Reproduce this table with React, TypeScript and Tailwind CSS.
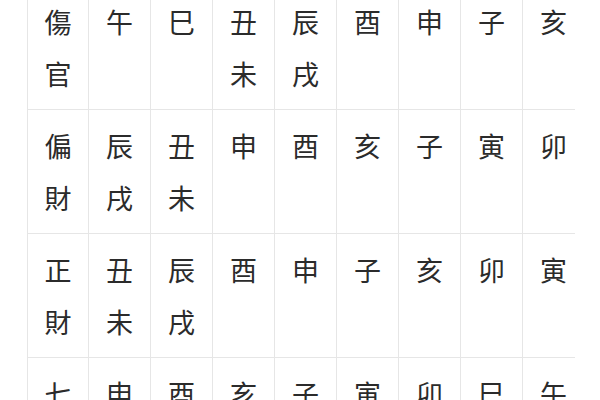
import * as React from "react";

const rows: string[][] = [
  ["傷官", "午", "巳", "丑未", "辰戌", "酉", "申", "子", "亥"],
  ["偏財", "辰戌", "丑未", "申", "酉", "亥", "子", "寅", "卯"],
  ["正財", "丑未", "辰戌", "酉", "申", "子", "亥", "卯", "寅"],
  ["七殺", "申", "酉", "亥", "子", "寅", "卯", "巳", "午"],
];

function Cell({ text, first }: { text: string; first: boolean }) {
  return (
    <div
      className={
        "flex shrink-0 flex-col items-center border-r border-[#e6e6e6] py-[10px] " +
        (first ? "w-[61px]" : "w-[62px]")
      }
    >
      {text.split("").map((ch, i) => (
        <span key={i} className="block h-[52px] leading-[52px]">
          {ch}
        </span>
      ))}
    </div>
  );
}

export default function App() {
  return (
    <div className="h-[400px] w-[600px] overflow-hidden bg-white">
      <div
        className="ml-[27px] -mt-[14px] w-[548px] overflow-hidden border-l border-[#e6e6e6] text-[27px] text-[#2b2b2b]"
        style={{ fontFamily: '"Noto Sans CJK TC", "Noto Sans CJK SC", sans-serif' }}
      >
        {rows.map((row, r) => (
          <div key={r} className="flex h-[124px] w-max border-b border-[#e6e6e6]">
            {row.map((cell, c) => (
              <Cell key={c} text={cell} first={c === 0} />
            ))}
          </div>
        ))}
      </div>
    </div>
  );
}
